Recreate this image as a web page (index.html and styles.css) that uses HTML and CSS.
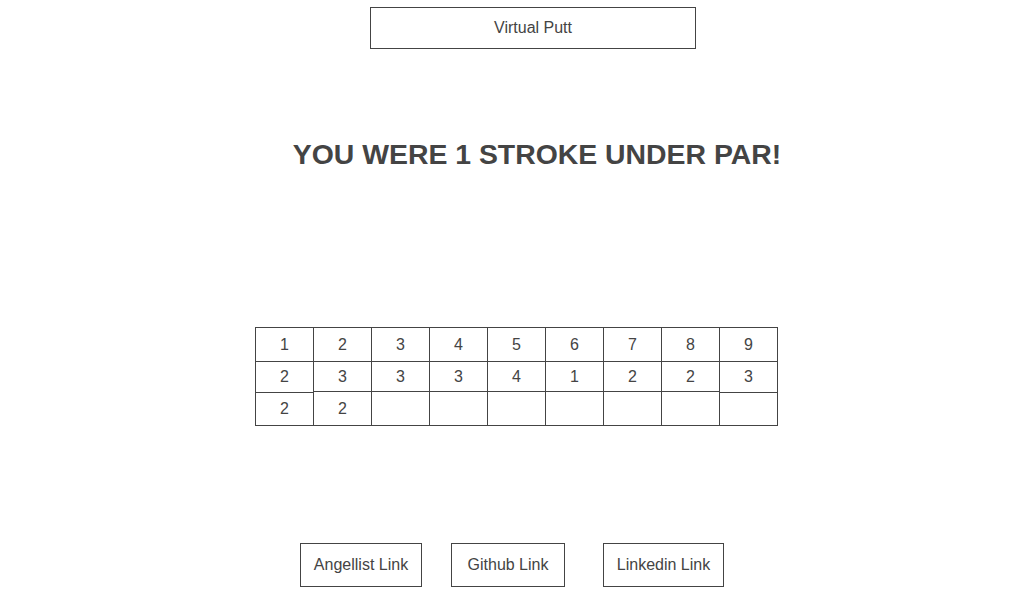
FILE: index.html
```html
<!DOCTYPE html>
<html>
<head>
<meta charset="utf-8">
<title>Virtual Putt</title>
<link rel="stylesheet" href="styles.css">
</head>
<body>
  <div class="title-box">Virtual Putt</div>
  <h1 class="result">YOU WERE 1 STROKE UNDER PAR!</h1>
  <div class="scorecard">
    <div class="col"><div class="cell top">1</div><div class="cell mid tall">2</div><div class="cell bot short">2</div></div>
    <div class="col"><div class="cell top">2</div><div class="cell mid">3</div><div class="cell bot">2</div></div>
    <div class="col"><div class="cell top">3</div><div class="cell mid">3</div><div class="cell bot"></div></div>
    <div class="col"><div class="cell top">4</div><div class="cell mid">3</div><div class="cell bot"></div></div>
    <div class="col"><div class="cell top">5</div><div class="cell mid">4</div><div class="cell bot"></div></div>
    <div class="col"><div class="cell top">6</div><div class="cell mid">1</div><div class="cell bot"></div></div>
    <div class="col"><div class="cell top">7</div><div class="cell mid">2</div><div class="cell bot"></div></div>
    <div class="col"><div class="cell top">8</div><div class="cell mid">2</div><div class="cell bot"></div></div>
    <div class="col"><div class="cell top">9</div><div class="cell mid tall">3</div><div class="cell bot short"></div></div>
  </div>
  <div class="links">
    <a class="link-btn btn-angel">Angellist Link</a>
    <a class="link-btn btn-github">Github Link</a>
    <a class="link-btn btn-linked">Linkedin Link</a>
  </div>
</body>
</html>
```
FILE: styles.css
```css
html, body {
  margin: 0;
  padding: 0;
  background: #ffffff;
}
body {
  font-family: "Liberation Sans", Arial, sans-serif;
  color: #444444;
  font-size: 16px;
}
.title-box {
  box-sizing: border-box;
  margin: 7px 0 0 370px;
  width: 326px;
  height: 42px;
  border: 1px solid #444444;
  display: flex;
  align-items: center;
  justify-content: center;
  color: #444444;
}
.result {
  margin: 89px 0 0 0;
  padding-left: 50px;
  text-align: center;
  font-size: 28.4px;
  font-weight: bold;
  line-height: 32px;
  height: 32px;
  color: #444444;
}
.scorecard {
  display: flex;
  margin: 157px 0 0 255px;
}
.col {
  display: flex;
  flex-direction: column;
  width: 59px;
}
.col + .col {
  margin-left: -1px;
}
.cell {
  box-sizing: border-box;
  border: 1px solid #444444;
  display: flex;
  align-items: center;
  justify-content: center;
  color: #444444;
}
.cell + .cell {
  margin-top: -1px;
}
.top { height: 35px; }
.mid { height: 31px; }
.bot { height: 35px; }
.mid.tall { height: 32px; }
.bot.short { height: 34px; }
.links {
  display: flex;
  margin: 117px 0 0 300px;
}
.link-btn {
  box-sizing: border-box;
  height: 44px;
  border: 1px solid #444444;
  display: flex;
  align-items: center;
  justify-content: center;
  color: #444444;
  text-decoration: none;
}
.btn-angel { width: 122px; }
.btn-github { width: 114px; margin-left: 29px; }
.btn-linked { width: 121px; margin-left: 38px; }
```
